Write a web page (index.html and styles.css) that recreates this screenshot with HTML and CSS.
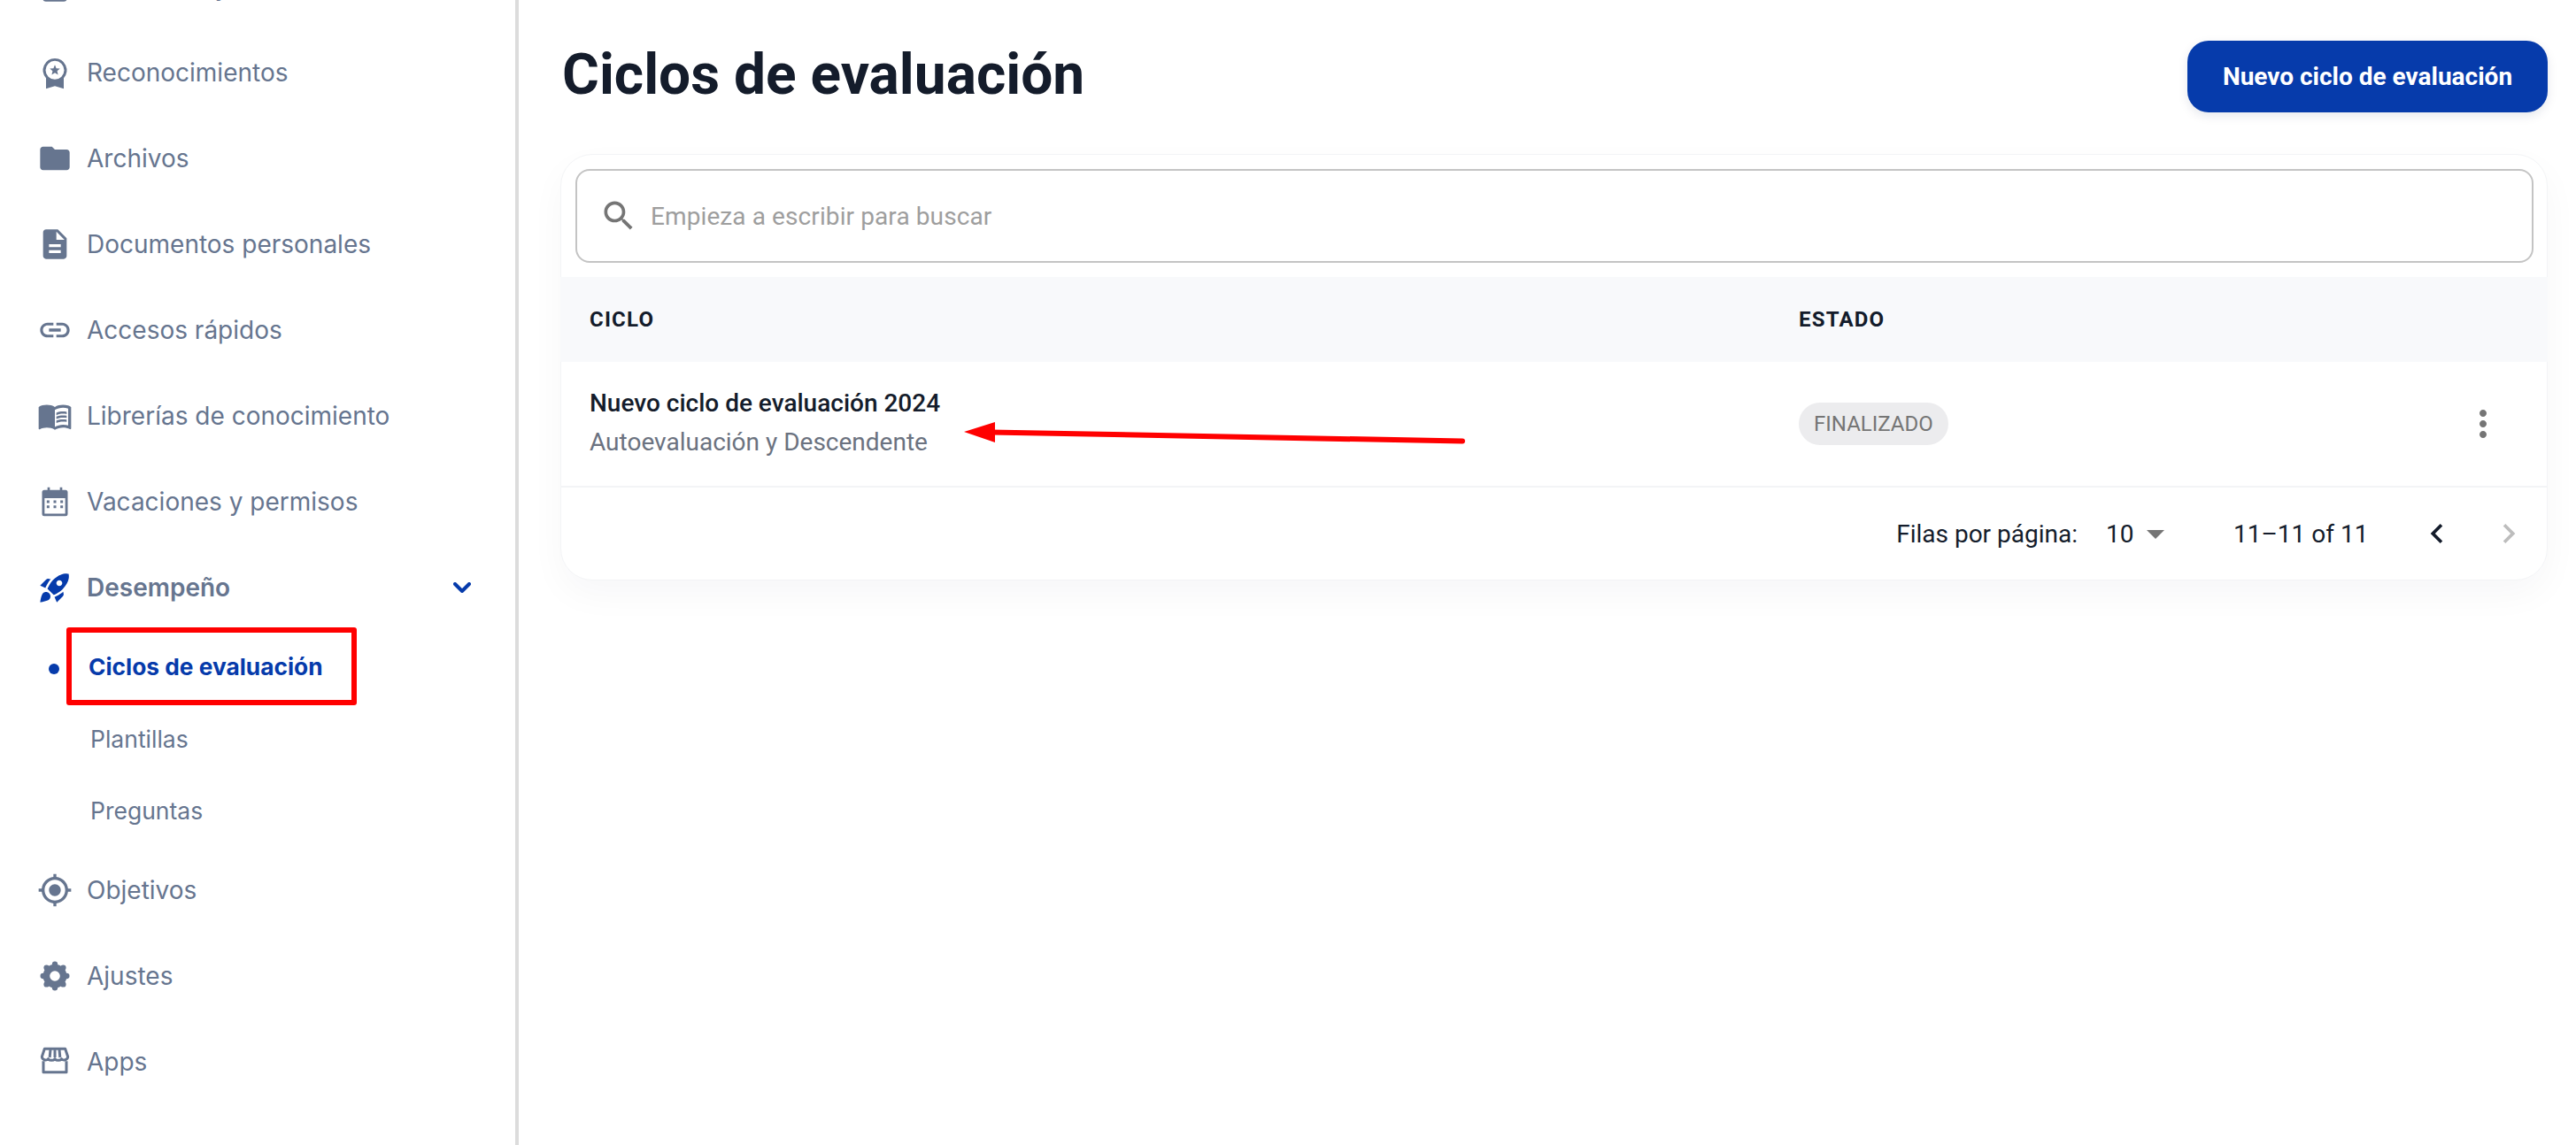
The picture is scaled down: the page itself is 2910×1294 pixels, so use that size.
FILE: index.html
```html
<!DOCTYPE html>
<html lang="es">
<head>
<meta charset="utf-8">
<title>Ciclos de evaluación</title>
<link rel="stylesheet" href="styles.css">
</head>
<body>
<div class="app">
  <aside class="sidebar">
    <nav class="nav">
      <a class="item"><svg class="icon" viewBox="0 0 24 24"><path d="M5.800 3h12.400a2 2 0 0 1 2 2v15a2 2 0 0 1-2 2H5.800a2 2 0 0 1-2-2V5a2 2 0 0 1 2-2z"/></svg><span>Encuestas y eNPS</span></a>
      <a class="item"><svg class="icon" viewBox="0 0 24 24"><path fill-rule="evenodd" d="M12 2.400a8 8 0 0 1 6 13.300V23l-6-1.800L6 23v-7.300a8 8 0 0 1 6-13.300zm0 1.700a6.300 6.300 0 1 0 0 12.600 6.300 6.300 0 0 0 0-12.600z"/><path d="m12 6.800.95 2.400 2.500.15-1.900 1.650.6 2.500-2.150-1.350-2.150 1.350.6-2.500-1.900-1.650 2.500-.15z"/></svg><span>Reconocimientos</span></a>
      <a class="item"><svg class="icon" viewBox="0 0 24 24"><path d="M10 4H4c-1.100 0-1.990.9-1.990 2L2 18c0 1.100.9 2 2 2h16c1.100 0 2-.9 2-2V8c0-1.100-.9-2-2-2h-8l-2-2z"/></svg><span>Archivos</span></a>
      <a class="item"><svg class="icon" viewBox="0 0 24 24"><path d="M14 2H6c-1.100 0-1.990.9-1.990 2L4 20c0 1.100.89 2 1.990 2H18c1.100 0 2-.9 2-2V8l-6-6zm2 16H8v-2h8v2zm0-4H8v-2h8v2zm-3-5V3.500L18.500 9H13z"/></svg><span>Documentos personales</span></a>
      <a class="item"><svg class="icon" viewBox="0 0 24 24"><path d="M3.900 12c0-1.710 1.390-3.100 3.100-3.100h4V7H7c-2.760 0-5 2.240-5 5s2.240 5 5 5h4v-1.900H7c-1.710 0-3.100-1.390-3.100-3.100zM8 13h8v-2H8v2zm9-6h-4v1.900h4c1.710 0 3.100 1.390 3.100 3.100s-1.390 3.100-3.100 3.100h-4V17h4c2.760 0 5-2.240 5-5s-2.240-5-5-5z"/></svg><span>Accesos rápidos</span></a>
      <a class="item"><svg class="icon" viewBox="0 0 24 24"><path d="M21 5c-1.110-.35-2.330-.5-3.500-.5-1.950 0-4.050.4-5.500 1.500-1.450-1.100-3.550-1.500-5.500-1.500S2.450 4.900 1 6v14.650c0 .25.25.5.5.5.1 0 .15-.05.25-.05C3.100 20.450 5.050 20 6.500 20c1.950 0 4.050.4 5.500 1.500 1.350-.85 3.800-1.500 5.500-1.500 1.650 0 3.350.3 4.750 1.050.1.05.15.05.25.05.25 0 .5-.25.5-.5V6c-.6-.45-1.250-.75-2-1zm0 13.500c-1.100-.35-2.300-.5-3.500-.5-1.700 0-4.150.65-5.500 1.500V8c1.350-.85 3.800-1.500 5.500-1.500 1.200 0 2.400.15 3.500.5v11.500z"/><path d="M17.500 10.500c.88 0 1.730.09 2.500.26V9.240c-.79-.15-1.640-.24-2.500-.24-1.700 0-3.240.29-4.500.83v1.660c1.130-.64 2.700-.99 4.500-.99zM13 12.490v1.660c1.130-.64 2.700-.99 4.500-.99.88 0 1.730.09 2.500.26V11.900c-.79-.15-1.640-.24-2.500-.24-1.700 0-3.240.3-4.500.83zm4.500 1.840c-1.700 0-3.240.29-4.500.83v1.660c1.130-.64 2.700-.99 4.500-.99.88 0 1.730.09 2.500.26v-1.520c-.79-.16-1.640-.24-2.500-.24z"/></svg><span>Librerías de conocimiento</span></a>
      <a class="item"><svg class="icon" viewBox="0 0 24 24"><path fill-rule="evenodd" d="M7 2.200h1.600v1.800h6.800V2.200H17v1.800h2.200a1.500 1.500 0 0 1 1.500 1.500v14.800a1.500 1.500 0 0 1-1.500 1.500H4.800a1.500 1.500 0 0 1-1.500-1.500V5.500A1.500 1.500 0 0 1 4.800 4H7zM5 9.600v10.500h14V9.600z"/><path d="M6.500 11.100h1.800v1.800H6.500zm4.600 0h1.800v1.800h-1.800zm4.600 0h1.800v1.800h-1.800zm-9.200 3.500h1.800v1.800H6.500zm4.600 0h1.800v1.800h-1.800zm4.600 0h1.800v1.800h-1.800z"/></svg><span>Vacaciones y permisos</span></a>
      <a class="item item-open"><svg class="icon icon-active" viewBox="0 0 24 24"><path fill-rule="evenodd" d="M9.190 6.350c-2.040 2.290-3.440 5.580-3.570 5.890L2 10.690l4.050-4.050c.47-.47 1.150-.68 1.810-.55l1.330.26zM11.170 17s3.740-1.550 5.890-3.700c5.400-5.400 4.500-9.620 4.210-10.570-.95-.3-5.170-1.190-10.570 4.210C8.550 9.090 7 12.830 7 12.830L11.170 17zm6.480-2.190c-2.290 2.040-5.580 3.440-5.890 3.570L13.310 22l4.050-4.050c.47-.47.68-1.150.55-1.810l-.26-1.330zM9 18c0 .83-.34 1.580-.88 2.120C6.940 21.300 2 22 2 22s.7-4.940 1.880-6.120C4.420 15.340 5.170 15 6 15c1.660 0 3 1.340 3 3zm4-9c0-1.100.9-2 2-2s2 .9 2 2-.9 2-2 2-2-.9-2-2z"/></svg><span>Desempeño</span><svg class="chevron" viewBox="0 0 20 12"><path d="M2 2l8 8 8-8"/></svg></a>
      <ul class="sub">
        <li class="sub-item sub-active"><i class="dot"></i>Ciclos de evaluación</li>
        <li class="sub-item">Plantillas</li>
        <li class="sub-item">Preguntas</li>
      </ul>
      <a class="item"><svg class="icon" viewBox="0 0 24 24"><path d="M12 8c-2.210 0-4 1.790-4 4s1.790 4 4 4 4-1.790 4-4-1.790-4-4-4zm8.940 3c-.46-4.170-3.770-7.480-7.940-7.940V1h-2v2.060C6.830 3.520 3.520 6.830 3.060 11H1v2h2.060c.46 4.170 3.770 7.480 7.940 7.940V23h2v-2.060c4.170-.46 7.480-3.770 7.940-7.940H23v-2h-2.060zM12 19c-3.870 0-7-3.130-7-7s3.130-7 7-7 7 3.130 7 7-3.130 7-7 7z"/></svg><span>Objetivos</span></a>
      <a class="item"><svg class="icon" viewBox="0 0 24 24"><circle cx="12" cy="12" r="8"/><circle cx="12" cy="4" r="1.900"/><circle cx="12" cy="20" r="1.900"/><circle cx="4" cy="12" r="1.900"/><circle cx="20" cy="12" r="1.900"/><circle cx="6.350" cy="6.350" r="1.900"/><circle cx="17.650" cy="6.350" r="1.900"/><circle cx="6.350" cy="17.650" r="1.900"/><circle cx="17.650" cy="17.650" r="1.900"/><circle class="gear-hole" cx="12" cy="12" r="3.500"/></svg><span>Ajustes</span></a>
      <a class="item"><svg class="icon icon-line" viewBox="0 0 24 24"><path d="M5 3.200h14l1.800 5.300a2.500 2.500 0 0 1-4.300 1.500 3 3 0 0 1-4.500 0 3 3 0 0 1-4.500 0 2.500 2.500 0 0 1-4.300-1.500z"/><path d="M4.200 11.500v7.600h15.600v-7.600M9 3.700 8.500 9M12 3.700V9M15 3.700l.5 5.300"/></svg><span>Apps</span></a>
    </nav>
  </aside>

  <main class="main">
    <header class="head">
      <h1 class="title">Ciclos de evaluación</h1>
      <button class="primary" type="button">Nuevo ciclo de evaluación</button>
    </header>

    <section class="card">
      <div class="search-wrap">
        <div class="search">
          <svg class="search-icon" viewBox="0 0 24 24"><path d="M15.500 14h-.79l-.28-.27C15.410 12.590 16 11.110 16 9.500 16 5.910 13.090 3 9.500 3S3 5.910 3 9.500 5.910 16 9.500 16c1.610 0 3.090-.59 4.230-1.570l.27.28v.79l5 4.990L20.490 19l-4.990-5zm-6 0C7.010 14 5 11.990 5 9.500S7.010 5 9.500 5 14 7.010 14 9.500 11.990 14 9.500 14z"/></svg>
          <span class="placeholder">Empieza a escribir para buscar</span>
        </div>
      </div>
      <div class="row row-head">
        <div class="cell-main">CICLO</div>
        <div class="cell-state">ESTADO</div>
      </div>
      <div class="row row-body">
        <div class="cell-main cycle">
          <div class="cycle-name">Nuevo ciclo de evaluación 2024</div>
          <div class="cycle-type">Autoevaluación y Descendente</div>
        </div>
        <div class="cell-state"><span class="chip">FINALIZADO</span></div>
        <svg class="more" viewBox="0 0 24 24"><path d="M12 8c1.100 0 2-.9 2-2s-.9-2-2-2-2 .9-2 2 .9 2 2 2zm0 2c-1.100 0-2 .9-2 2s.9 2 2 2 2-.9 2-2-.9-2-2-2zm0 6c-1.100 0-2 .9-2 2s.9 2 2 2 2-.9 2-2-.9-2-2-2z"/></svg>
      </div>
      <div class="pager">
        <span class="pager-label">Filas por página:</span>
        <span class="pager-size">10<svg class="caret" viewBox="0 0 24 24"><path d="M7 10l5 5 5-5z"/></svg></span>
        <span class="pager-range">11–11 of 11</span>
        <svg class="page-btn" viewBox="0 0 24 24"><path d="M15.410 7.410 14 6l-6 6 6 6 1.410-1.410L10.830 12z"/></svg>
        <svg class="page-btn page-off" viewBox="0 0 24 24"><path d="M10 6 8.590 7.410 13.170 12l-4.580 4.590L10 18l6-6z"/></svg>
      </div>
    </section>
  </main>
</div>

<div class="mark-box"></div>
<svg class="mark-arrow" viewBox="0 0 600 40"><path class="arrow-line" d="M30 13.500 L563 23.500"/><path class="arrow-head" d="M0 13 L35 2 L35 25 z"/></svg>
</body>
</html>
```

FILE: styles.css
```css
* { box-sizing: border-box; }
html, body { margin: 0; height: 1294px; overflow: hidden; background: #fff; }
body { position: relative; font-family: Roboto, "Noto Sans", sans-serif; }

.app { display: flex; height: 1294px; }

.sidebar {
  width: 586px;
  flex: none;
  border-right: 4px solid #dcdcdc;
  overflow: hidden;
  font-family: Inter, "Noto Sans", sans-serif;
  color: #66758f;
}
.nav { margin-top: -63.5px; }
.item {
  display: flex;
  align-items: center;
  gap: 16px;
  height: 97px;
  padding-left: 42px;
  font-size: 28px;
}
.icon { width: 40px; height: 40px; flex: none; fill: #66758f; }
.icon-active { fill: #063bab; }
.icon-line { fill: none; stroke: #66758f; stroke-width: 1.800; stroke-linejoin: round; }
.gear-hole { fill: #fff; }
.item-open { font-weight: 600; }
.chevron {
  width: 20px;
  height: 12px;
  margin-left: auto;
  margin-right: 50px;
  fill: none;
  stroke: #063bab;
  stroke-width: 4;
  stroke-linecap: round;
  stroke-linejoin: round;
}
.sub { list-style: none; margin: 0; padding: 0; }
.sub-item {
  position: relative;
  display: flex;
  align-items: center;
  height: 81.5px;
  padding-left: 102px;
  font-size: 26.5px;
}
.sub-active { padding-left: 100px; color: #063bab; font-size: 26.3px; font-weight: 700; }
.dot {
  position: absolute;
  left: 55px;
  top: 37px;
  width: 12px;
  height: 12px;
  border-radius: 50%;
  background: #063bab;
}

.main { flex: 1; min-width: 0; padding: 46px 32px 0 47px; }
.head { display: flex; justify-content: space-between; align-items: flex-start; margin-bottom: 47px; }
.title { margin: 0; padding-left: 2px; font-size: 64px; line-height: 78px; font-weight: 700; color: #141c2b; }
.primary {
  width: 407px;
  height: 81px;
  border: 0;
  border-radius: 24px;
  background: #063bab;
  color: #fff;
  font: 700 28px Roboto, sans-serif;
  box-shadow: 0 4px 12px rgba(6, 30, 80, .1);
}

.card {
  height: 482px;
  border-radius: 36px;
  background: #fff;
  overflow: hidden;
  outline: 1px solid #f3f4f6;
  outline-offset: -1px;
  box-shadow: 0 16px 40px rgba(20, 28, 43, .035);
}
.search-wrap { padding: 17px 16px 16px 17px; }
.search {
  display: flex;
  align-items: center;
  gap: 14px;
  height: 106px;
  padding-left: 25px;
  border: 2px solid #c4c4c4;
  border-radius: 16px;
}
.search-icon { width: 44px; height: 44px; flex: none; fill: #757575; }
.placeholder { font-size: 28px; letter-spacing: .1px; color: #9e9e9e; }

.row { position: relative; display: flex; align-items: center; padding-left: 33px; }
.cell-main { width: 1366px; flex: none; }
.row-head {
  height: 96px;
  background: #f8f9fb;
  font-size: 24px;
  font-weight: 700;
  letter-spacing: 1.2px;
  color: #141c2b;
}
.row-body { height: 142px; border-bottom: 2px solid #f3f4f6; }
.cycle { padding-bottom: 2px; }
.cycle-name { font-size: 28px; line-height: 42px; font-weight: 500; color: #141c2b; }
.cycle-type { margin-top: 2px; font-size: 28px; line-height: 42px; color: #6b7280; }
.chip {
  display: inline-flex;
  align-items: center;
  height: 48px;
  padding: 0 17px;
  border-radius: 24px;
  background: #ececee;
  font-size: 24px;
  color: #757575;
}
.more { position: absolute; right: 49px; top: 46px; width: 48px; height: 48px; fill: #757575; }

.pager {
  display: flex;
  align-items: center;
  justify-content: flex-end;
  height: 104px;
  padding-right: 22px;
  font-size: 28px;
  color: #141c2b;
}
.pager-size { display: flex; align-items: center; margin-left: 32px; width: 144px; }
.caret { width: 48px; height: 48px; margin-left: 1px; fill: #757575; }
.pager-range { width: 208px; }
.page-btn { width: 44px; height: 44px; fill: #141c2b; margin-right: 37px; }
.page-off { fill: #bdbdbd; margin-right: 0; }

.mark-box {
  position: absolute;
  left: 75px;
  top: 709px;
  width: 328px;
  height: 88px;
  border: 6px solid #ff0000;
  border-radius: 3px;
  pointer-events: none;
}
.mark-arrow { position: absolute; left: 1089px; top: 475px; width: 600px; height: 40px; }
.arrow-line { fill: none; stroke: #ff0000; stroke-width: 6; stroke-linecap: round; }
.arrow-head { fill: #ff0000; }
```
